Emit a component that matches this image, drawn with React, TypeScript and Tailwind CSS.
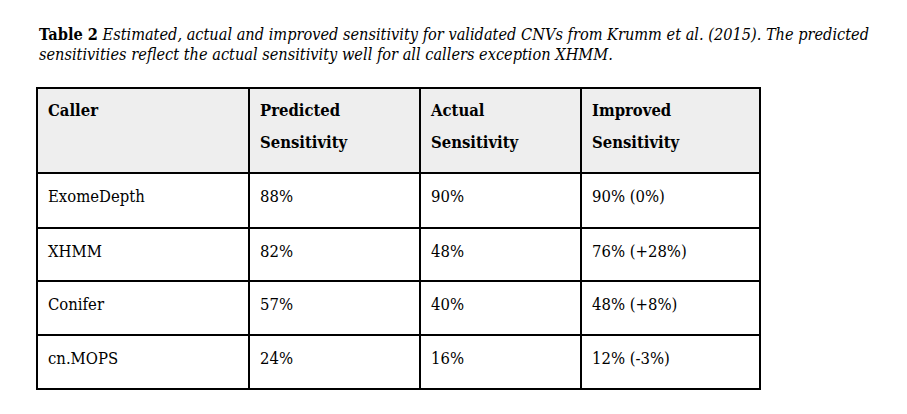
const rows = [
  ['ExomeDepth', '88%', '90%', '90% (0%)'],
  ['XHMM', '82%', '48%', '76% (+28%)'],
  ['Conifer', '57%', '40%', '48% (+8%)'],
  ['cn.MOPS', '24%', '16%', '12% (-3%)'],
];

const rowHeights = ['h-[55px]', 'h-[53px]', 'h-[54px]', 'h-[54px]'];

export default function App() {
  return (
    <div className="w-[907px] h-[414px] bg-white text-black font-['DejaVu_Serif_Condensed','DejaVu_Serif',serif] font-stretch-condensed">
      <div className="pl-[39px] pt-[25px]">
        {/* caption */}
        <p className="text-[16.2px] leading-[20px] whitespace-nowrap">
          <b>Table 2</b>{' '}
          <i>Estimated, actual and improved sensitivity for validated CNVs from Krumm et al. (2015). The predicted</i>
          <br />
          <i>sensitivities reflect the actual sensitivity well for all callers exception XHMM.</i>
        </p>
      </div>

      <table className="ml-[36px] mt-[22px] table-fixed border-collapse text-[16.5px] leading-[32px]">
        <colgroup>
          <col className="w-[212px]" />
          <col className="w-[171px]" />
          <col className="w-[161px]" />
          <col className="w-[179px]" />
        </colgroup>
        <thead>
          <tr className="h-[85px] bg-[#eeeeee]">
            <th className="border-2 border-black align-top text-left font-bold pl-[10px] pt-[6px]">Caller</th>
            <th className="border-2 border-black align-top text-left font-bold pl-[10px] pt-[6px]">
              Predicted
              <br />
              Sensitivity
            </th>
            <th className="border-2 border-black align-top text-left font-bold pl-[10px] pt-[6px]">
              Actual
              <br />
              Sensitivity
            </th>
            <th className="border-2 border-black align-top text-left font-bold pl-[10px] pt-[6px]">
              Improved
              <br />
              Sensitivity
            </th>
          </tr>
        </thead>
        <tbody>
          {rows.map((r, i) => (
            <tr key={r[0]} className={rowHeights[i]}>
              {r.map((c, j) => (
                <td key={j} className="border-2 border-black align-top pl-[10px] pt-[7px]">
                  {c}
                </td>
              ))}
            </tr>
          ))}
        </tbody>
      </table>
    </div>
  );
}
